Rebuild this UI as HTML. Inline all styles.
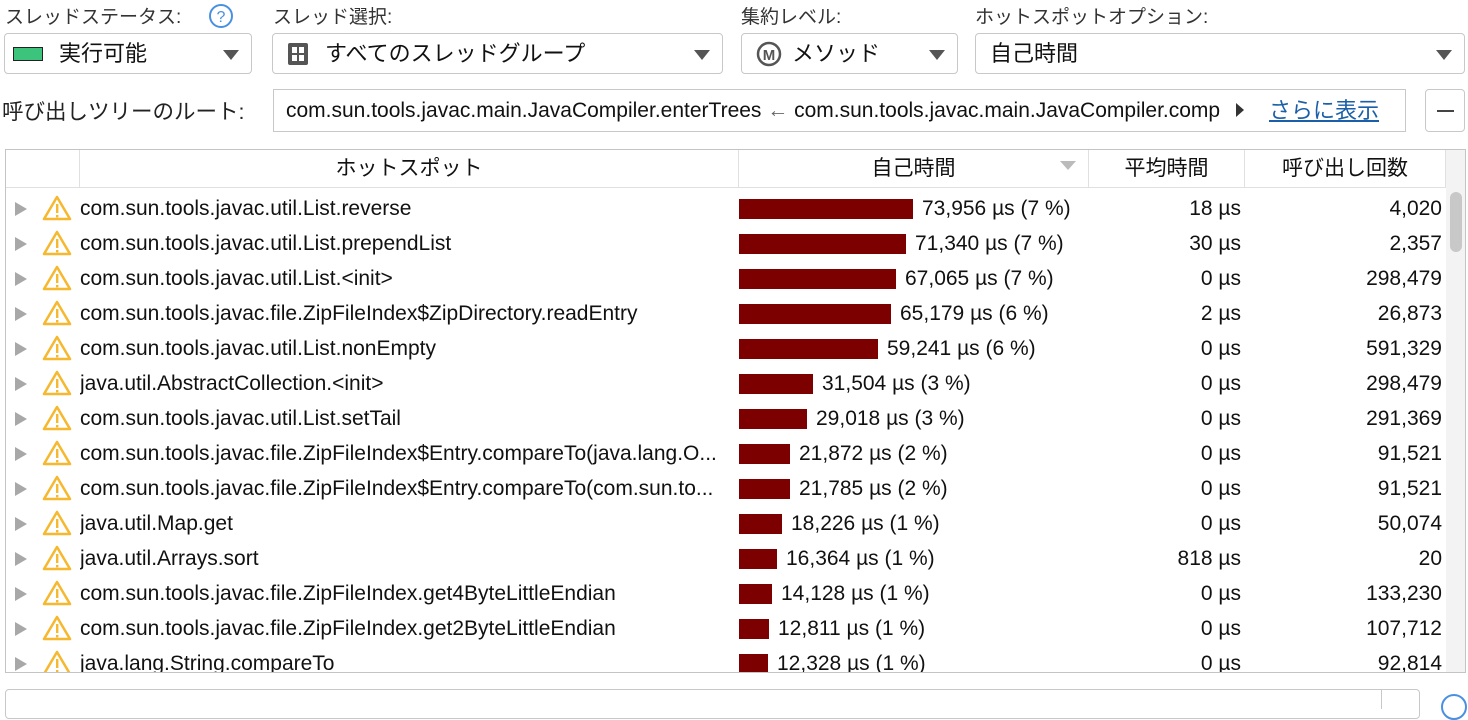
<!DOCTYPE html>
<html><head><meta charset="utf-8"><style>
*{box-sizing:border-box;margin:0;padding:0}
body{width:1468px;height:700px;overflow:hidden;background:#fff;font-family:"Liberation Sans","Noto Sans CJK JP",sans-serif;color:#111;position:relative}
.a{position:absolute;white-space:nowrap}
.lbl{font-size:19px;color:#333;top:2px}
.combo{position:absolute;top:33px;height:41px;border:1px solid #c8c8c8;border-radius:4px;background:#fff;font-size:22px;line-height:39px}
.arr{position:absolute;right:12px;top:16px;width:0;height:0;border-left:8px solid transparent;border-right:8px solid transparent;border-top:10px solid #555}
.tbl{position:absolute;left:5px;top:149px;width:1461px;height:524px;border:1px solid #c4c4c4;overflow:hidden}
.hd{position:absolute;top:0;height:38px;border-right:1px solid #e0e0e0;border-bottom:1px solid #e0e0e0;font-size:21px;line-height:38px;text-align:center}
.row{position:absolute;left:0;width:1440px;height:35px;font-size:21px;line-height:35px}
.tri{position:absolute;left:9px;top:11px;width:0;height:0;border-top:7px solid transparent;border-bottom:7px solid transparent;border-left:12px solid #a8a8a8}
.bar{position:absolute;left:733px;top:8px;height:20px;background:#7d0000}
.r{position:absolute;text-align:right}
</style></head><body>
<div class="a lbl" style="left:5px">スレッドステータス:</div>
<svg class="a" style="left:208px;top:3px" width="26" height="26"><circle cx="13" cy="13" r="11" fill="none" stroke="#4a90e2" stroke-width="2"/><text x="13" y="19" font-size="16" text-anchor="middle" fill="#4a90e2" font-family="Liberation Sans">?</text></svg>
<div class="a lbl" style="left:273px">スレッド選択:</div>
<div class="a lbl" style="left:741px">集約レベル:</div>
<div class="a lbl" style="left:975px">ホットスポットオプション:</div>

<div class="combo" style="left:4px;width:248px"><span class="a" style="left:8px;top:13px;width:30px;height:14px;background:#3cc47c;border:1px solid #222"></span><span class="a" style="left:54px;top:0">実行可能</span><span class="arr"></span></div>
<div class="combo" style="left:272px;width:451px"><svg class="a" style="left:14px;top:8px" width="22" height="24"><rect x="1" y="1" width="20" height="22" rx="2" fill="#555"/><rect x="5" y="5" width="5" height="6" fill="#fff"/><rect x="12" y="5" width="5" height="6" fill="#fff"/><rect x="5" y="13" width="5" height="6" fill="#fff"/><rect x="12" y="13" width="5" height="6" fill="#fff"/></svg><span class="a" style="left:52px;top:0">すべてのスレッドグループ</span><span class="arr"></span></div>
<div class="combo" style="left:741px;width:217px"><svg class="a" style="left:14px;top:7px" width="26" height="26"><circle cx="13" cy="13" r="11" fill="none" stroke="#555" stroke-width="2.5"/><text x="13" y="19" font-size="15" font-weight="bold" text-anchor="middle" fill="#555" font-family="Liberation Sans">M</text></svg><span class="a" style="left:50px;top:0">メソッド</span><span class="arr"></span></div>
<div class="combo" style="left:975px;width:490px"><span class="a" style="left:14px;top:0">自己時間</span><span class="arr"></span></div>

<div class="a" style="left:2px;top:95px;font-size:21.5px;color:#222">呼び出しツリーのルート:</div>
<div class="a" style="left:273px;top:89px;width:1133px;height:43px;border:1px solid #c8c8c8;font-size:21px;line-height:41px"><span class="a" style="left:12px">com.sun.tools.javac.main.JavaCompiler.enterTrees <span style="color:#666">←</span> com.sun.tools.javac.main.JavaCompiler.comp</span><span class="a" style="left:962px;top:13px;border-top:7px solid transparent;border-bottom:7px solid transparent;border-left:8px solid #333"></span><span class="a" style="left:995px;color:#1a5fa8;text-decoration:underline;font-size:22px">さらに表示</span></div>
<div class="a" style="left:1425px;top:89px;width:40px;height:43px;border:1px solid #c8c8c8;border-radius:4px"><span class="a" style="left:11px;top:20px;width:17px;height:2px;background:#444"></span></div>

<div class="tbl">
<div class="hd" style="left:0;width:74px"></div>
<div class="hd" style="left:74px;width:659px">ホットスポット</div>
<div class="hd" style="left:733px;width:350px">自己時間<span class="a" style="right:12px;top:11px;border-left:8px solid transparent;border-right:8px solid transparent;border-top:9px solid #bbb"></span></div>
<div class="hd" style="left:1083px;width:156px">平均時間</div>
<div class="hd" style="left:1239px;width:201px">呼び出し回数</div>
<div class="a" style="left:1440px;top:0;width:20px;height:523px;background:#f3f3f3"></div>
<div class="a" style="left:1444px;top:42px;width:12px;height:60px;background:#c8c8c8;border-radius:6px"></div>
<div id="rows"></div>
</div>

<div class="a" style="left:5px;top:689px;width:1415px;height:30px;border:1px solid #c8c8c8;border-radius:4px"></div>
<div class="a" style="left:1381px;top:689px;width:1px;height:20px;background:#c8c8c8"></div>
<div class="a" style="left:1441px;top:694px;width:26px;height:26px;border:2px solid #4a90e2;border-radius:50%"></div>

<script>
var d=[["com.sun.tools.javac.util.List.reverse",174,"73,956 µs (7 %)","18 µs","4,020"],
["com.sun.tools.javac.util.List.prependList",167,"71,340 µs (7 %)","30 µs","2,357"],
["com.sun.tools.javac.util.List.&lt;init&gt;",157,"67,065 µs (7 %)","0 µs","298,479"],
["com.sun.tools.javac.file.ZipFileIndex$ZipDirectory.readEntry",152,"65,179 µs (6 %)","2 µs","26,873"],
["com.sun.tools.javac.util.List.nonEmpty",139,"59,241 µs (6 %)","0 µs","591,329"],
["java.util.AbstractCollection.&lt;init&gt;",74,"31,504 µs (3 %)","0 µs","298,479"],
["com.sun.tools.javac.util.List.setTail",68,"29,018 µs (3 %)","0 µs","291,369"],
["com.sun.tools.javac.file.ZipFileIndex$Entry.compareTo(java.lang.O...",51,"21,872 µs (2 %)","0 µs","91,521"],
["com.sun.tools.javac.file.ZipFileIndex$Entry.compareTo(com.sun.to...",51,"21,785 µs (2 %)","0 µs","91,521"],
["java.util.Map.get",43,"18,226 µs (1 %)","0 µs","50,074"],
["java.util.Arrays.sort",38,"16,364 µs (1 %)","818 µs","20"],
["com.sun.tools.javac.file.ZipFileIndex.get4ByteLittleEndian",33,"14,128 µs (1 %)","0 µs","133,230"],
["com.sun.tools.javac.file.ZipFileIndex.get2ByteLittleEndian",30,"12,811 µs (1 %)","0 µs","107,712"],
["java.lang.String.compareTo",29,"12,328 µs (1 %)","0 µs","92,814"]];
var h="";
d.forEach(function(r,i){var t=41+35*i;
h+='<div class="row" style="top:'+t+'px"><span class="tri"></span>'+
'<svg class="a" style="left:36px;top:4px" width="30" height="26"><path d="M15 2 L28 24 L2 24 Z" fill="none" stroke="#f5b82e" stroke-width="2.5" stroke-linejoin="round"/><rect x="14" y="9" width="2.4" height="9" fill="#f5b82e"/><rect x="14" y="20" width="2.4" height="2.4" fill="#f5b82e"/></svg>'+
'<span class="a" style="left:74px;width:657px;overflow:hidden">'+r[0]+'</span><span class="bar" style="width:'+r[1]+'px"></span>'+
'<span class="a" style="left:'+(733+r[1]+9)+'px">'+r[2]+'</span>'+
'<span class="r" style="right:205px">'+r[3]+'</span><span class="r" style="right:4px">'+r[4]+'</span></div>';});
document.getElementById("rows").innerHTML=h;
</script>
</body></html>
